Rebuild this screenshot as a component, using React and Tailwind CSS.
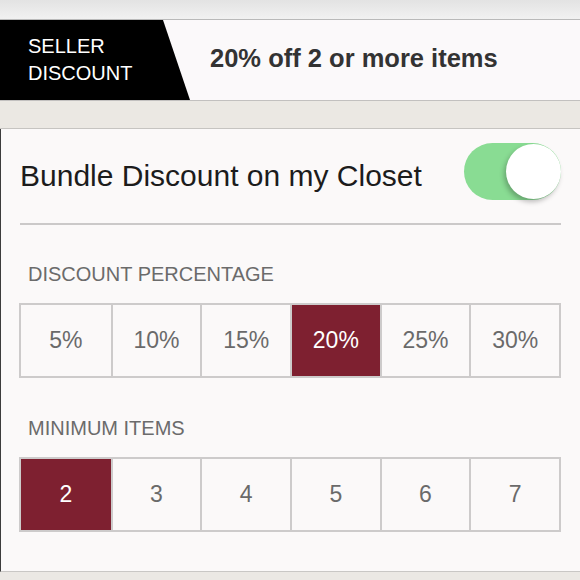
import { useState } from 'react';

const percentages = ['5%', '10%', '15%', '20%', '25%', '30%'];
const minimums = ['2', '3', '4', '5', '6', '7'];

function Segmented({ options, value, onChange }) {
  return (
    <div className="grid grid-cols-6 h-[75px] border-2 border-[#cdcbcb]">
      {options.map((opt, i) => (
        <button
          key={opt}
          onClick={() => onChange(opt)}
          className={`flex items-center justify-center text-[23px] ${i > 0 ? 'border-l-2 border-[#cdcbcb]' : ''} ${
            value === opt ? 'bg-[#7e2030] text-white' : 'text-[#6a6a6a]'
          }`}
        >
          {opt}
        </button>
      ))}
    </div>
  );
}

function Toggle({ on, onChange }) {
  return (
    <button
      onClick={() => onChange(!on)}
      className={`relative w-[97px] h-[57px] rounded-full ${on ? 'bg-[#89dc93]' : 'bg-[#e5e5e5]'}`}
    >
      <span
        className={`absolute top-[1px] w-[55px] h-[55px] rounded-full bg-white shadow-[-2px_3px_5px_rgba(0,0,0,0.25)] ${
          on ? 'right-0' : 'left-0'
        }`}
      />
    </button>
  );
}

export default function App() {
  const [enabled, setEnabled] = useState(true);
  const [percent, setPercent] = useState('20%');
  const [minItems, setMinItems] = useState('2');

  return (
    <div className="w-[580px] h-[580px] overflow-hidden bg-[#ebe8e4] font-['Liberation_Sans',Arial,sans-serif]">
      {/* status strip */}
      <div className="h-[20px] bg-gradient-to-b from-[#e3e3e3] to-[#f1f1f1] border-b border-[#b9b9b9]" />

      {/* seller discount banner */}
      <div className="h-[81px] flex bg-[#fbf9fa] border-b border-[#c2c0bf]">
        <div className="w-[190px] bg-black [clip-path:polygon(0_0,163px_0,100%_100%,0_100%)] flex flex-col justify-center pl-[28px] text-white text-[20px] leading-[27px]">
          <span>SELLER</span>
          <span>DISCOUNT</span>
        </div>
        <div className="flex items-center pl-[20px] pb-[4px] text-[25.5px] font-semibold text-[#333]">
          {percent} off {minItems} or more items
        </div>
      </div>

      {/* textured gap */}
      <div className="h-[28px] bg-[#ebe8e3] border-b border-[#c6c4c1]" />

      {/* settings card */}
      <div className="h-[443px] bg-[#fbf9f9] border-l border-[#3c3c3c] border-b border-b-[#c9c7c5] pl-[18px] pr-[19px] pt-[14px]">
        <div className="flex items-center justify-between">
          <span className="mt-[8px] ml-[1px] text-[30px] text-[#1c1c1c]">Bundle Discount on my Closet</span>
          <Toggle on={enabled} onChange={setEnabled} />
        </div>
        <div className="mt-[23px] ml-[1px] border-t-2 border-[#cbc9c9]" />

        <div className="mt-[37px] mb-[17px] pl-[9px] text-[20px] leading-[24px] text-[#6b6b6b]">DISCOUNT PERCENTAGE</div>
        <Segmented options={percentages} value={percent} onChange={setPercent} />

        <div className="mt-[38px] mb-[17px] pl-[9px] text-[20px] leading-[24px] text-[#6b6b6b]">MINIMUM ITEMS</div>
        <Segmented options={minimums} value={minItems} onChange={setMinItems} />
      </div>
    </div>
  );
}
